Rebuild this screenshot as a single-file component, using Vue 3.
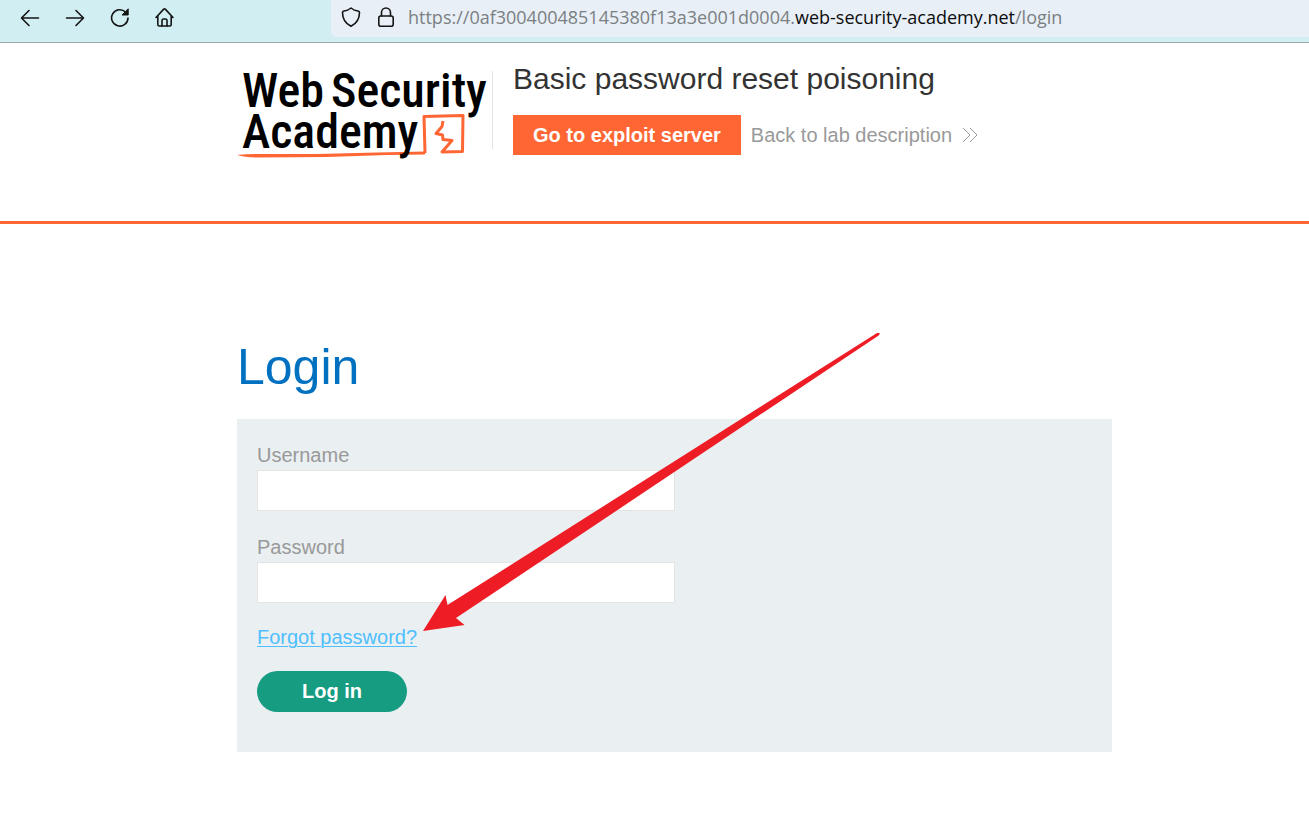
<script setup>
import { ref } from 'vue'

const username = ref('')
const password = ref('')
</script>

<template>
  <div class="page">
    <nav class="toolbar" aria-label="Browser">
      <div class="nav-buttons">
        <button type="button" aria-label="Back">
          <svg viewBox="0 0 20 20"><path d="M18.500 10H1.800M9 2.500L1.500 10L9 17.500" /></svg>
        </button>
        <button type="button" aria-label="Forward">
          <svg viewBox="0 0 20 20"><path d="M1.500 10H18.200M11 2.500L18.500 10L11 17.500" /></svg>
        </button>
        <button type="button" aria-label="Reload">
          <svg viewBox="0 0 20 20">
            <path d="M15.500 4A8.200 8.200 0 1 0 18 10" />
            <path class="solid" d="M18.200 1.200V7H12.400Z" />
          </svg>
        </button>
        <button type="button" aria-label="Home">
          <svg viewBox="0 0 20 20">
            <path d="M1 9.500L8.500 1.400Q9.500 .5 10.500 1.400L18 9.500M2.800 8V16.500Q2.800 18 4.300 18H14.700Q16.200 18 16.200 16.500V8" />
            <path d="M7 18V12.500Q7 11 8.500 11H10.500Q12 11 12 12.500V18" />
          </svg>
        </button>
      </div>
      <div class="address">
        <svg viewBox="0 0 20 20"><path d="M10 1Q13 3.500 17 4Q18.500 4.300 18.500 5.500Q18.500 15 10 19.300Q1.500 15 1.500 5.500Q1.500 4.300 3 4Q7 3.500 10 1Z" /></svg>
        <svg viewBox="0 0 20 20"><path d="M5.500 9V5.500A4.500 4.500 0 0 1 14.500 5.500V9" /><rect x="2.800" y="9" width="14.400" height="10.200" rx="2" /></svg>
        <span class="url">https://0af300400485145380f13a3e001d0004.<b>web-security-academy.net</b>/login</span>
      </div>
    </nav>

    <header class="lab-header">
      <div class="container lab">
        <a class="logo" href="#" aria-label="Web Security Academy">
          <svg viewBox="0 0 256 100">
            <text x="5" y="46">Web</text>
            <text x="94" y="46">Security</text>
            <path class="underline" d="M0 94Q10 93 24 93L80 93L140 91.500L188 90.500V93.500L150 94L90 96L20 96.500Q8 96.500 0 94Z" />
            <path class="frame" d="M188 92L187 55.500L226 54.500L225.500 90.500L205 91L215 79.500L206 78.500L205.500 74L199 72.500L205 65.500L206 60" />
            <text x="5" y="87">Academy</text>
          </svg>
        </a>
        <div class="lab-info">
          <h2>Basic password reset poisoning</h2>
          <div class="lab-links">
            <a class="exploit" href="#">Go to exploit server</a>
            <a class="back" href="#">Back to lab description
              <svg viewBox="0 0 16 16"><path d="M1 1L8 8L1 15M8 1L15 8L8 15" /></svg>
            </a>
          </div>
        </div>
      </div>
    </header>

    <main class="container">
      <h1>Login</h1>
      <form class="login" @submit.prevent>
        <label for="username">Username</label>
        <input id="username" v-model="username" type="text">
        <label for="password">Password</label>
        <input id="password" v-model="password" type="password">
        <a class="forgot" href="#">Forgot password?</a>
        <button class="submit" type="submit">Log in</button>
        <svg class="arrow" viewBox="0 0 460 300" aria-hidden="true">
          <path d="M0 298L22.500 262L24.500 272L454 0Q458 -1 456 2.200L33 285L41.500 292Z" />
        </svg>
      </form>
    </main>
  </div>
</template>

<style>
body {
  margin: 0;
  background: #fff;
}
</style>

<style scoped>
.page {
  font: 20px/24px "Liberation Sans", Arial, sans-serif;
  color: #333;
}

.toolbar {
  display: flex;
  height: 42px;
  background: #d1eef2;
  border-bottom: 1px solid #9aa9ad;
}

.nav-buttons {
  display: flex;
  flex: 0 0 311px;
  gap: 25px;
  height: 36px;
  align-items: center;
  padding-left: 20px;
}

.nav-buttons button {
  width: 20px;
  height: 20px;
  padding: 0;
  border: 0;
  background: none;
}

.toolbar svg {
  display: block;
  flex: none;
  width: 20px;
  height: 20px;
  fill: none;
  stroke: #151515;
  stroke-width: 1.600;
  stroke-linecap: round;
  stroke-linejoin: round;
}

.toolbar .solid {
  fill: #151515;
  stroke-width: 1;
}

.address {
  display: flex;
  flex: 1;
  align-items: center;
  gap: 15px;
  height: 37px;
  padding: 0 0 3px 10px;
  border-radius: 0 0 0 5px;
  background: #e8eff6;
  box-sizing: border-box;
  overflow: hidden;
}

.url {
  margin-left: -3px;
  font: 18px/24px "Open Sans", "Noto Sans", sans-serif;
  color: #7b8083;
  white-space: nowrap;
}

.url b {
  font-weight: 400;
  color: #0c0c0d;
}

.container {
  box-sizing: border-box;
  max-width: 875px;
  margin: 0 auto;
}

.lab-header,
main {
  padding-left: 40px;
}

.lab-header {
  border-bottom: 3px solid #ff6633;
}

.lab {
  display: flex;
  gap: 20px;
  height: 178px;
  padding-top: 18px;
}

.logo {
  flex: none;
  width: 255px;
  height: 78px;
  margin-top: 10px;
  border-right: 1px solid #e3e3e3;
}

.logo svg {
  display: block;
  width: 256px;
  height: 100px;
  margin-top: -10px;
}

.logo text {
  font: 500 48px "Roboto Condensed", "Liberation Sans Narrow", Roboto, sans-serif;
  fill: #000;
}

.underline {
  fill: #ff6633;
}

.frame {
  fill: none;
  stroke: #ff6633;
  stroke-width: 3;
  stroke-linejoin: round;
}

h2 {
  margin: 0;
  font-size: 30px;
  font-weight: 400;
  line-height: 36px;
}

.lab-links {
  display: flex;
  align-items: center;
  gap: 10px;
  margin-top: 18px;
}

.exploit {
  padding: 8px 20px;
  background: #ff6633;
  color: #fff;
  font-weight: 700;
  text-decoration: none;
}

.back {
  display: flex;
  align-items: center;
  gap: 10px;
  color: #999;
  text-decoration: none;
}

.back svg {
  width: 16px;
  height: 16px;
  fill: none;
  stroke: #999;
  stroke-width: 1;
}

main.container {
  max-width: 915px;
  padding-top: 114px;
}

h1 {
  margin: 0 0 23px;
  font-size: 50px;
  font-weight: 400;
  line-height: 58px;
  color: #0070c0;
}

.login {
  position: relative;
  display: flex;
  flex-direction: column;
  align-items: flex-start;
  padding: 24px 20px 40px;
  background: #eaeff2;
}

label {
  margin-bottom: 3px;
  color: #999;
}

input {
  box-sizing: border-box;
  width: 50%;
  height: 41px;
  margin: 0 0 24px;
  padding: 0 10px;
  border: 1px solid #e4e4e4;
  background: #fff;
  font: inherit;
}

.forgot {
  margin: -2px 0 22px;
  color: #4fbfff;
  text-decoration: underline #4fbfff 1px;
  text-underline-offset: 2px;
}

.submit {
  width: 150px;
  height: 41px;
  padding: 0 0 2px;
  border: 0;
  border-radius: 21px;
  background: #169c80;
  color: #fff;
  font: inherit;
  font-weight: 700;
}

.arrow {
  position: absolute;
  left: 186px;
  top: -86px;
  width: 460px;
  height: 300px;
  fill: #ee1c25;
  pointer-events: none;
}
</style>
